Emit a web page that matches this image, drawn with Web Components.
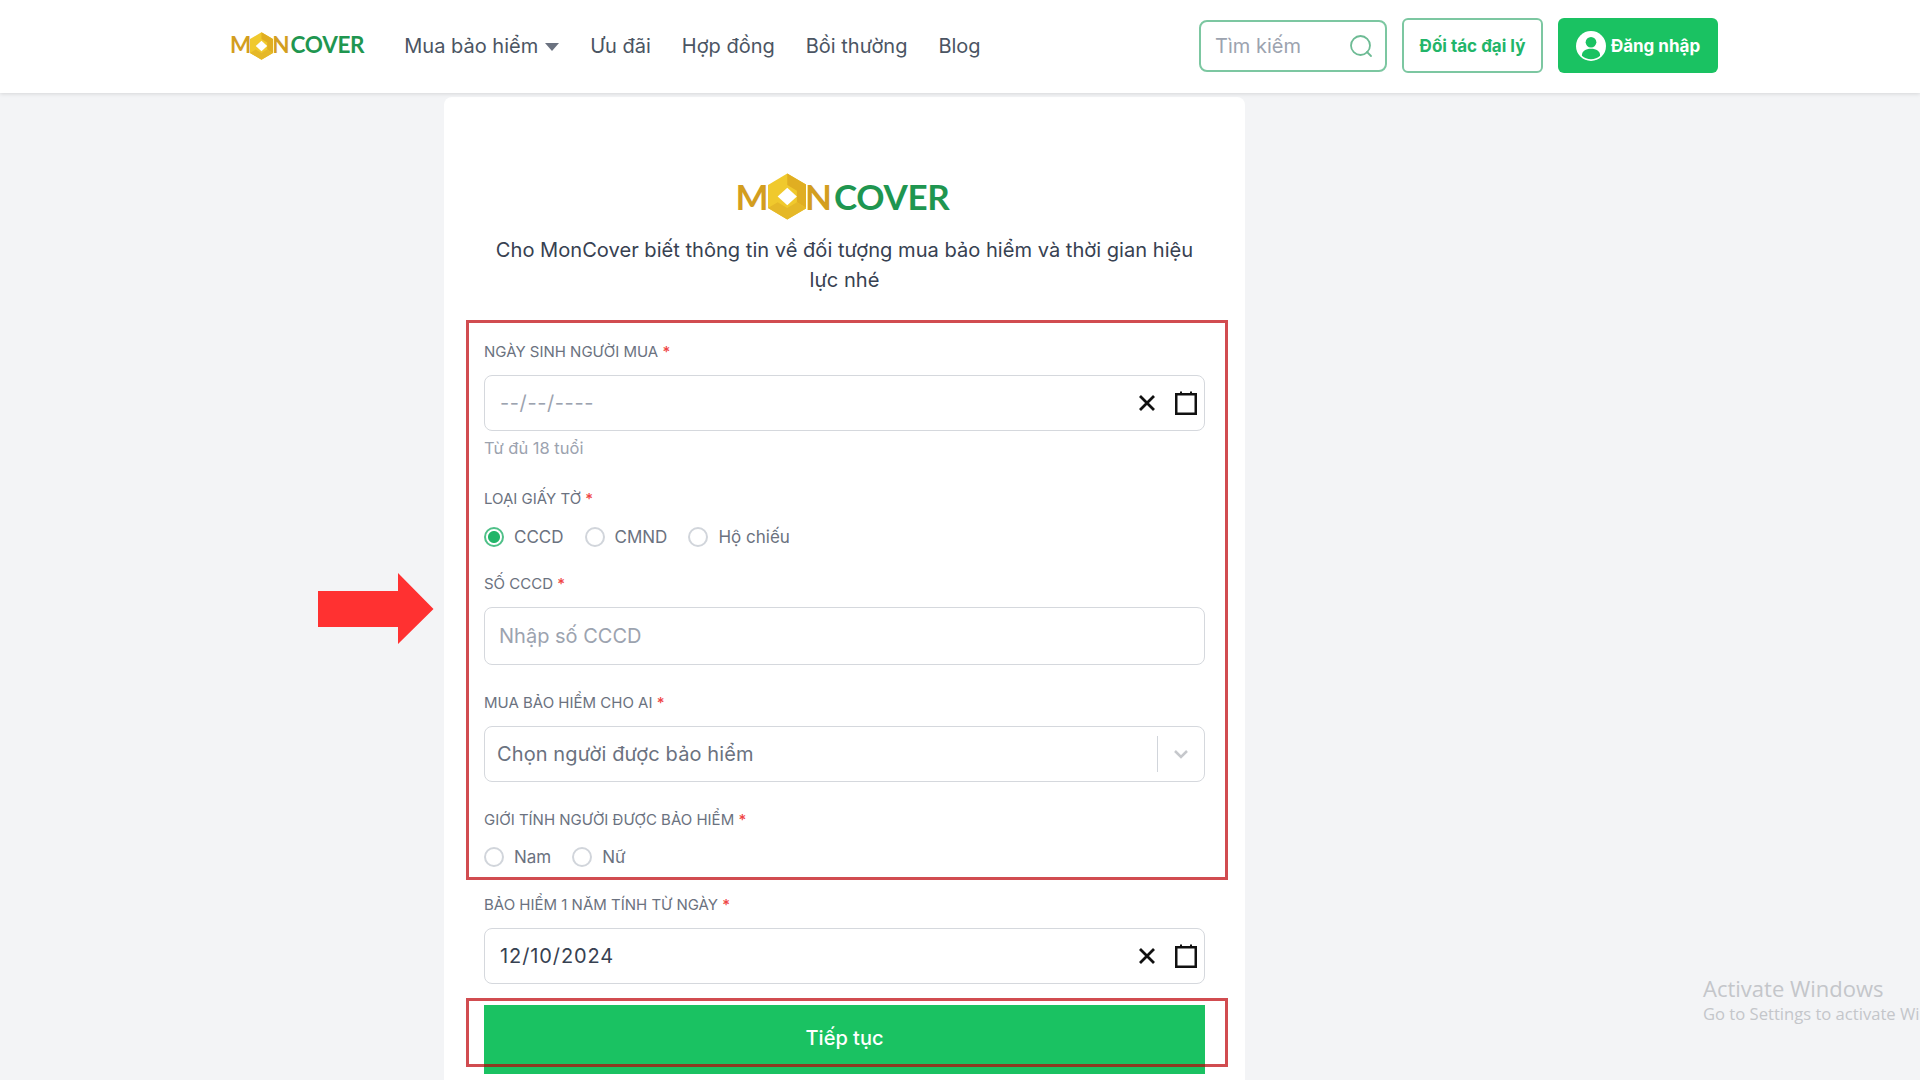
<!DOCTYPE html>
<html lang="vi">
<head>
<meta charset="utf-8">
<title>MonCover</title>
<style>
    html, body { margin: 0; height: 100%; }
    body {
        position: relative;
        height: 1080px;
        overflow: hidden;
        background: #f3f4f6;
        font-family: Inter, "Noto Sans", sans-serif;
    }
    main { display: block; width: 801px; margin: 4px 0 0 444px; }
</style>
</head>
<body>
<app-header></app-header>
<main>
    <form-card>
        <mc-logo slot="logo" size="large"></mc-logo>
        <span slot="intro">Cho MonCover biết thông tin về đối tượng mua bảo hiểm và thời gian hiệu lực nhé</span>

        <form-field label="Ngày sinh người mua" hint="Từ đủ 18 tuổi" style="--label-gap: 12px">
            <date-input placeholder="--/--/----"></date-input>
        </form-field>
        <form-field label="Loại giấy tờ" style="--top: 30px; --label-gap: 15px">
            <radio-row options="CCCD|CMND|Hộ chiếu" checked="0"></radio-row>
        </form-field>
        <form-field label="Số CCCD" style="--top: 24px; --label-gap: 12px">
            <text-input placeholder="Nhập số CCCD"></text-input>
        </form-field>
        <form-field label="Mua bảo hiểm cho ai" style="--top: 27px; --label-gap: 12px">
            <select-input placeholder="Chọn người được bảo hiểm"></select-input>
        </form-field>
        <form-field label="Giới tính người được bảo hiểm" style="--top: 27px; --label-gap: 14px">
            <radio-row options="Nam|Nữ"></radio-row>
        </form-field>
        <form-field label="Bảo hiểm 1 năm tính từ ngày" style="--top: 25px; --label-gap: 12px">
            <date-input value="12/10/2024"></date-input>
        </form-field>
        <primary-button>Tiếp tục</primary-button>
    </form-card>
</main>

<!-- red annotations drawn over the page -->
<red-box style="left: 466px; top: 320px; width: 762px; height: 560px"></red-box>
<red-box style="left: 466px; top: 998px; width: 762px; height: 69px"></red-box>
<red-arrow style="left: 318px; top: 573px"></red-arrow>
<win-watermark style="left: 1703px; top: 973px"></win-watermark>

<script>
class McLogo extends HTMLElement {
    connectedCallback() {
        const large = this.getAttribute('size') === 'large';
        const font = large ? 35 : 22.5;
        const hex = large ? 47 : 28;
        this.attachShadow({ mode: 'open' });
        this.shadowRoot.innerHTML = `
            <style>
                :host { display: inline-flex; align-items: center; height: ${hex}px; }
                span {
                    font-family: Lato, "Open Sans", sans-serif;
                    font-size: ${font}px;
                    font-weight: 700;
                    line-height: 1;
                }
                .gold { color: #d39e1f; }
                .green { color: #1f9650; margin-left: ${large ? 2 : 1}px; letter-spacing: -0.3px; }
                svg { width: ${hex * 0.82}px; height: ${hex}px; margin: 0 -1px; flex: none; }
            </style>
            <span class="gold">M</span>
            <svg viewBox="0 0 40 48" aria-hidden="true">
                <polygon points="20,0 40,12 40,36 20,48 0,36 0,12" fill="#f0c92d"/>
                <polygon points="20,0 40,12 40,36 30,30 30,18 20,12" fill="#e0ae22"/>
                <polygon points="0,36 20,48 40,36 30,30 20,36 10,30" fill="#e5b828"/>
                <polygon points="20,15 30,24 20,33 10,24" fill="#fff"/>
            </svg>
            <span class="gold">N</span><span class="green">COVER</span>
        `;
    }
}

class AppHeader extends HTMLElement {
    constructor() {
        super();
        this.attachShadow({ mode: 'open' });
        this.shadowRoot.innerHTML = `
            <style>
                :host {
                    display: flex;
                    align-items: center;
                    box-sizing: border-box;
                    height: 93px;
                    padding: 0 202px 2px 230px;
                    background: #fff;
                    box-shadow: 0 1px 4px rgba(0, 0, 0, 0.12);
                    position: relative;
                    z-index: 1;
                }
                nav {
                    display: flex;
                    align-items: center;
                    gap: 31px;
                    margin-left: 40px;
                    font-size: 20px;
                    color: #4b5563;
                }
                .drop { display: flex; align-items: center; gap: 7px; }
                .caret {
                    width: 0;
                    height: 0;
                    border-left: 7px solid transparent;
                    border-right: 7px solid transparent;
                    border-top: 8px solid #6b7280;
                    margin-top: 2px;
                }
                .actions {
                    display: flex;
                    align-items: center;
                    gap: 15px;
                    margin-left: auto;
                }
                .search {
                    display: flex;
                    align-items: center;
                    justify-content: space-between;
                    box-sizing: border-box;
                    width: 188px;
                    height: 52px;
                    padding: 0 12px 0 14px;
                    border: 2px solid #7cc7a1;
                    border-radius: 8px;
                    font-size: 20px;
                    color: #9ca3af;
                }
                .btn {
                    display: flex;
                    align-items: center;
                    justify-content: center;
                    box-sizing: border-box;
                    height: 55px;
                    border-radius: 6px;
                    font-size: 17px;
                    font-weight: 700;
                }
                .partner { width: 141px; border: 2px solid #7cc7a1; color: #22b569; }
                .login { width: 160px; gap: 5px; background: #1ac262; color: #fff; }
            </style>
            <mc-logo></mc-logo>
            <nav>
                <span class="drop">Mua bảo hiểm <i class="caret"></i></span>
                <span>Ưu đãi</span>
                <span>Hợp đồng</span>
                <span>Bồi thường</span>
                <span>Blog</span>
            </nav>
            <div class="actions">
                <div class="search">
                    <span>Tìm kiếm</span>
                    <svg width="24" height="24" viewBox="0 0 24 24" fill="none" stroke="#6dbb94" stroke-width="1.8">
                        <circle cx="11.5" cy="11.5" r="9.5"/>
                        <path d="M18 18l4 4" stroke-linecap="round"/>
                    </svg>
                </div>
                <div class="btn partner">Đối tác đại lý</div>
                <div class="btn login">
                    <svg width="30" height="30" viewBox="0 0 28 28">
                        <circle cx="14" cy="14" r="14" fill="#fff"/>
                        <circle cx="14" cy="10.5" r="5" fill="#1ac262"/>
                        <path d="M5.5 23c0-4.5 3.5-6.5 8.5-6.5s8.5 2 8.500 6.500c-2.200 2-5.200 3.300-8.500 3.300s-6.300-1.300-8.500-3.300z" fill="#1ac262"/>
                    </svg>
                    <span>Đăng nhập</span>
                </div>
            </div>
        `;
    }
}

class FormCard extends HTMLElement {
    constructor() {
        super();
        this.attachShadow({ mode: 'open' });
        this.shadowRoot.innerHTML = `
            <style>
                :host {
                    display: block;
                    box-sizing: border-box;
                    height: 1000px;
                    padding: 76px 40px 0 40px;
                    background: #fff;
                    border-radius: 8px;
                }
                .logo { display: flex; justify-content: center; margin-left: -4px; }
                .intro {
                    margin: 15px 0 46px;
                    text-align: center;
                    font-size: 20.1px;
                    line-height: 30px;
                    color: #374151;
                }
            </style>
            <div class="logo"><slot name="logo"></slot></div>
            <div class="intro"><slot name="intro"></slot></div>
            <slot></slot>
        `;
    }
}

class FormField extends HTMLElement {
    constructor() {
        super();
        this.attachShadow({ mode: 'open' });
    }

    connectedCallback() {
        const hint = this.getAttribute('hint');
        this.shadowRoot.innerHTML = `
            <style>
                :host { display: block; margin-top: var(--top, 0); }
                label {
                    display: block;
                    margin-bottom: var(--label-gap, 12px);
                    font-size: 15px;
                    line-height: 22px;
                    text-transform: uppercase;
                    color: #6b7280;
                }
                b { font-weight: 500; color: #ef4444; }
                .hint { margin-top: 7px; font-size: 16.5px; line-height: 20px; color: #9ca3af; }
            </style>
            <label>${this.getAttribute('label')} <b>*</b></label>
            <slot></slot>
            ${hint ? `<div class="hint">${hint}</div>` : ''}
        `;
    }
}

// shared look of the three boxed inputs
const boxStyle = `
    :host {
        display: flex;
        align-items: center;
        box-sizing: border-box;
        height: 56px;
        border: 1.5px solid #d5d8dd;
        border-radius: 8px;
        background: #fff;
        font-size: 20px;
        color: #9ca3af;
    }
`;

class DateInput extends HTMLElement {
    constructor() {
        super();
        this.attachShadow({ mode: 'open' });
    }

    connectedCallback() {
        const value = this.getAttribute('value');
        this.shadowRoot.innerHTML = `
            <style>
                ${boxStyle}
                :host { padding: 0 7px 0 15px; }
                span { flex: 1; }
                .filled { color: #374151; letter-spacing: 0.9px; }
                .empty { color: #9ca3af; letter-spacing: 0.6px; }
                svg { display: block; }
                .clear { margin-right: 19px; }
            </style>
            <span class="${value ? 'filled' : 'empty'}">${value || this.getAttribute('placeholder')}</span>
            <svg class="clear" width="18" height="18" viewBox="0 0 18 18" stroke="#111" stroke-width="2.8" fill="none">
                <path d="M2 2l14 14M16 2L2 16"/>
            </svg>
            <svg width="22" height="24" viewBox="0 0 22 24" fill="none" stroke="#111">
                <rect x="1.250" y="3.250" width="19.500" height="19.500" stroke-width="2.500"/>
                <path d="M6 0.500v3M16 0.500v3" stroke-width="2"/>
            </svg>
        `;
    }
}

class TextInput extends HTMLElement {
    constructor() {
        super();
        this.attachShadow({ mode: 'open' });
    }

    connectedCallback() {
        this.shadowRoot.innerHTML = `
            <style>
                ${boxStyle}
                :host { height: 58px; padding-left: 14px; }
            </style>
            <span>${this.getAttribute('placeholder')}</span>
        `;
    }
}

class SelectInput extends HTMLElement {
    constructor() {
        super();
        this.attachShadow({ mode: 'open' });
    }

    connectedCallback() {
        this.shadowRoot.innerHTML = `
            <style>
                ${boxStyle}
                :host { padding-left: 12px; }
                span { flex: 1; color: #6b7280; letter-spacing: 0.1px; }
                i { width: 1.5px; height: 36px; background: #d1d5db; }
                svg { margin: 0 14px; }
            </style>
            <span>${this.getAttribute('placeholder')}</span>
            <i></i>
            <svg width="18" height="18" viewBox="0 0 18 18" fill="none" stroke="#c6c8cc" stroke-width="2.500">
                <path d="M3 6l6 6 6-6"/>
            </svg>
        `;
    }
}

class RadioRow extends HTMLElement {
    constructor() {
        super();
        this.attachShadow({ mode: 'open' });
    }

    connectedCallback() {
        const checked = this.getAttribute('checked');
        const options = this.getAttribute('options').split('|').map((text, i) => `
            <span class="option">
                <i class="${String(i) === checked ? 'on' : ''}"></i>${text}
            </span>
        `).join('');
        this.shadowRoot.innerHTML = `
            <style>
                :host { display: flex; gap: 21px; height: 24px; align-items: center; font-size: 17px; color: #6b7280; }
                .option { display: flex; align-items: center; gap: 10px; }
                i {
                    box-sizing: border-box;
                    width: 20px;
                    height: 20px;
                    border: 2px solid #d1d5db;
                    border-radius: 50%;
                    background: #fff;
                }
                i.on { border-color: #4fc088; background: radial-gradient(circle, #22b569 0 5.500px, #fff 6.500px); }
            </style>
            ${options}
        `;
    }
}

class PrimaryButton extends HTMLElement {
    constructor() {
        super();
        this.attachShadow({ mode: 'open' });
        this.shadowRoot.innerHTML = `
            <style>
                :host {
                    display: flex;
                    align-items: center;
                    justify-content: center;
                    box-sizing: border-box;
                    height: 69px;
                    margin-top: 21px;
                    padding-bottom: 3px;
                    background: #1ac262;
                    color: #fff;
                    font-size: 20px;
                    font-weight: 500;
                }
            </style>
            <slot></slot>
        `;
    }
}

class RedBox extends HTMLElement {
    constructor() {
        super();
        this.attachShadow({ mode: 'open' });
        this.shadowRoot.innerHTML = `
            <style>
                :host {
                    position: absolute;
                    box-sizing: border-box;
                    border: 3.5px solid rgba(190, 0, 5, 0.7);
                    pointer-events: none;
                }
            </style>
        `;
    }
}

class RedArrow extends HTMLElement {
    constructor() {
        super();
        this.attachShadow({ mode: 'open' });
        this.shadowRoot.innerHTML = `
            <style>:host { position: absolute; display: block; width: 116px; height: 72px; }</style>
            <svg width="116" height="72" viewBox="0 0 116 72">
                <polygon points="0,18 80,18 80,0 115.500,36 80,71 80,54 0,54" fill="#ff3131"/>
            </svg>
        `;
    }
}

class WinWatermark extends HTMLElement {
    constructor() {
        super();
        this.attachShadow({ mode: 'open' });
        this.shadowRoot.innerHTML = `
            <style>
                :host {
                    position: absolute;
                    display: block;
                    right: 0;
                    white-space: nowrap;
                    font-family: "Open Sans", sans-serif;
                    color: #c4c6ca;
                }
                .title { font-size: 22px; line-height: 30px; }
                .sub { font-size: 16.6px; line-height: 22px; }
            </style>
            <div class="title">Activate Windows</div>
            <div class="sub">Go to Settings to activate Wi</div>
        `;
    }
}

customElements.define('mc-logo', McLogo);
customElements.define('app-header', AppHeader);
customElements.define('form-card', FormCard);
customElements.define('form-field', FormField);
customElements.define('date-input', DateInput);
customElements.define('text-input', TextInput);
customElements.define('select-input', SelectInput);
customElements.define('radio-row', RadioRow);
customElements.define('primary-button', PrimaryButton);
customElements.define('red-box', RedBox);
customElements.define('red-arrow', RedArrow);
customElements.define('win-watermark', WinWatermark);
</script>
</body>
</html>
